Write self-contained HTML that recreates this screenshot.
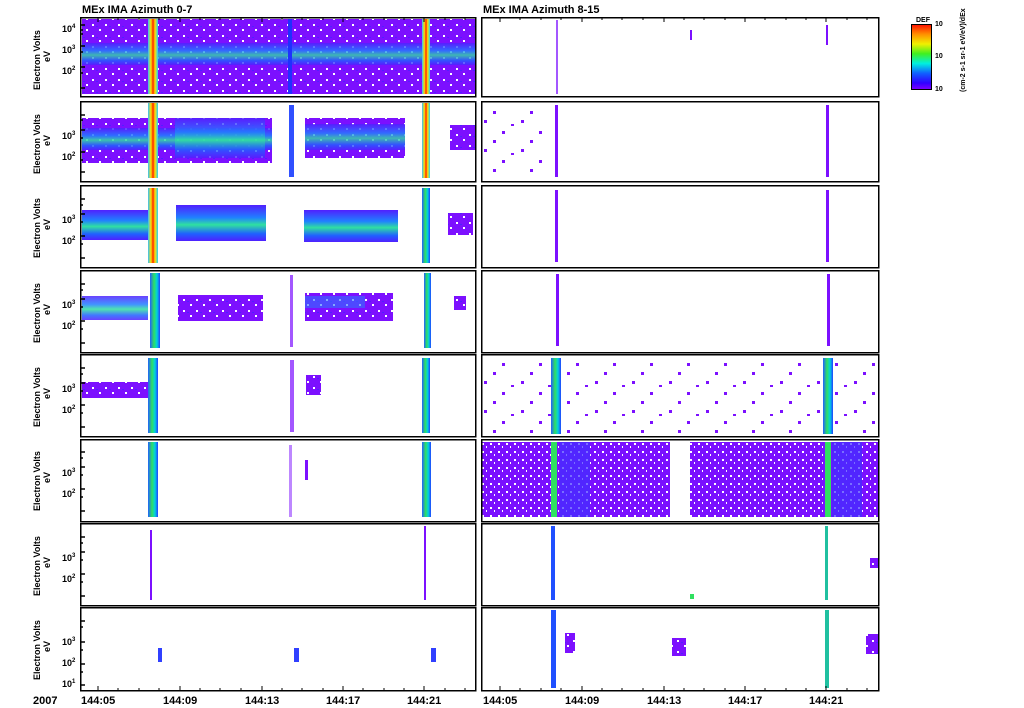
<!DOCTYPE html>
<html><head><meta charset="utf-8"><style>
html,body{margin:0;padding:0;background:#fff;width:1024px;height:708px;overflow:hidden}
svg{display:block;font-family:"Liberation Sans",sans-serif}
.lbl{font-size:11px;font-weight:bold;fill:#000}
.yl{font-size:9px;font-weight:bold;fill:#000}
</style></head><body>
<svg width="1024" height="708" viewBox="0 0 1024 708" xmlns="http://www.w3.org/2000/svg">
<defs>
<pattern id="dense" width="13" height="11" patternUnits="userSpaceOnUse">
<rect width="13" height="11" fill="#7c10ff"/><rect x="1" y="2" width="2" height="2" fill="#fff"/><rect x="8" y="7" width="2" height="2" fill="#fff"/><rect x="5" y="4" width="2" height="1" fill="#5020ff"/>
</pattern>
<pattern id="vdense" width="8" height="8" patternUnits="userSpaceOnUse">
<rect width="8" height="8" fill="#7a10ff"/><rect x="2" y="3" width="2" height="2" fill="#fff"/><rect x="6" y="6" width="1" height="2" fill="#fff"/>
</pattern>
<pattern id="sparse" width="37" height="29" patternUnits="userSpaceOnUse">
<rect x="3" y="4" width="3" height="3" fill="#7c10ff"/><rect x="21" y="15" width="3" height="3" fill="#7c10ff"/><rect x="12" y="24" width="3" height="3" fill="#7c10ff"/><rect x="30" y="8" width="3" height="2" fill="#7c10ff"/>
</pattern>
<linearGradient id="rain" x1="0" x2="1">
<stop offset="0" stop-color="#30c0ff"/><stop offset=".3" stop-color="#ffe000"/><stop offset=".5" stop-color="#ff2000"/><stop offset=".7" stop-color="#ffe000"/><stop offset="1" stop-color="#20d0ff"/>
</linearGradient>
<linearGradient id="gstripe" x1="0" x2="1">
<stop offset="0" stop-color="#2060ff"/><stop offset=".4" stop-color="#30e060"/><stop offset=".7" stop-color="#00d0e0"/><stop offset="1" stop-color="#2040ff"/>
</linearGradient>
<linearGradient id="cbar" x1="0" y1="0" x2="0" y2="1">
<stop offset="0" stop-color="#ff1000"/><stop offset=".15" stop-color="#ff9000"/><stop offset=".3" stop-color="#f0f000"/><stop offset=".45" stop-color="#40f020"/><stop offset=".6" stop-color="#00f0e0"/><stop offset=".75" stop-color="#1060ff"/><stop offset=".9" stop-color="#3000ff"/><stop offset="1" stop-color="#8000ff"/>
</linearGradient>
<linearGradient id="band" x1="0" y1="0" x2="0" y2="1">
<stop offset="0" stop-color="#5020ff"/><stop offset=".35" stop-color="#2080ff"/><stop offset=".55" stop-color="#30e0a0"/><stop offset=".8" stop-color="#2060ff"/><stop offset="1" stop-color="#5020ff"/>
</linearGradient>
</defs>

<text x="82" y="13" class="lbl">MEx IMA Azimuth 0-7</text>
<text x="483" y="13" class="lbl">MEx IMA Azimuth 8-15</text>

<!-- Row 1 -->
<g>
<rect x="82" y="19" width="393" height="75" fill="url(#dense)"/>
<rect x="82" y="43" width="393" height="22" fill="url(#band)" opacity=".8"/>
<rect x="148" y="19" width="10" height="75" fill="url(#rain)"/>
<rect x="422" y="19" width="8" height="75" fill="url(#rain)"/>
<rect x="288" y="19" width="4" height="75" fill="#2030ff"/>
<rect x="556" y="20" width="2" height="74" fill="#7c10ff" opacity=".7"/>
<rect x="690" y="30" width="2" height="10" fill="#7c10ff"/>
<rect x="826" y="25" width="2" height="20" fill="#7c10ff"/>
</g>
<!-- Row 2 -->
<g>
<rect x="82" y="118" width="190" height="45" fill="url(#dense)"/>
<rect x="82" y="128" width="190" height="22" fill="url(#band)" opacity=".85"/>
<rect x="175" y="118" width="90" height="40" fill="url(#band)" opacity=".8"/>
<rect x="305" y="118" width="100" height="40" fill="url(#dense)"/>
<rect x="305" y="124" width="100" height="26" fill="url(#band)" opacity=".8"/>
<rect x="148" y="103" width="10" height="75" fill="url(#rain)"/>
<rect x="422" y="103" width="8" height="75" fill="url(#rain)"/>
<rect x="289" y="105" width="5" height="72" fill="#3050ff"/>
<rect x="450" y="125" width="25" height="25" fill="url(#dense)"/>
<rect x="484" y="105" width="60" height="70" fill="url(#sparse)"/>
<rect x="555" y="105" width="3" height="72" fill="#7c10ff"/>
<rect x="826" y="105" width="3" height="72" fill="#7c10ff"/>
</g>
<!-- Row 3 -->
<g>
<rect x="82" y="210" width="66" height="30" fill="url(#band)"/>
<rect x="176" y="205" width="90" height="36" fill="url(#band)"/>
<rect x="304" y="210" width="94" height="32" fill="url(#band)"/>
<rect x="148" y="188" width="10" height="75" fill="url(#rain)"/>
<rect x="422" y="188" width="8" height="75" fill="url(#gstripe)"/>
<rect x="448" y="213" width="25" height="22" fill="url(#dense)"/>
<rect x="555" y="190" width="3" height="72" fill="#7c10ff"/>
<rect x="826" y="190" width="3" height="72" fill="#7c10ff"/>
</g>
<!-- Row 4 -->
<g>
<rect x="82" y="296" width="66" height="24" fill="url(#band)" opacity=".85"/>
<rect x="178" y="295" width="85" height="26" fill="url(#dense)"/>
<rect x="305" y="293" width="88" height="28" fill="url(#dense)"/>
<rect x="305" y="296" width="60" height="12" fill="#3070ff" opacity=".6"/>
<rect x="150" y="273" width="10" height="75" fill="url(#gstripe)"/>
<rect x="424" y="273" width="7" height="75" fill="url(#gstripe)"/>
<rect x="290" y="275" width="3" height="72" fill="#7c10ff" opacity=".7"/>
<rect x="454" y="296" width="12" height="14" fill="url(#dense)"/>
<rect x="556" y="274" width="3" height="72" fill="#7c10ff"/>
<rect x="827" y="274" width="3" height="72" fill="#7c10ff"/>
</g>
<!-- Row 5 -->
<g>
<rect x="82" y="382" width="66" height="16" fill="url(#dense)"/>
<rect x="148" y="358" width="10" height="75" fill="url(#gstripe)"/>
<rect x="422" y="358" width="8" height="75" fill="url(#gstripe)"/>
<rect x="290" y="360" width="4" height="72" fill="#7c10ff" opacity=".7"/>
<rect x="306" y="375" width="15" height="20" fill="url(#dense)"/>
<rect x="482" y="358" width="396" height="76" fill="url(#sparse)"/>
<rect x="551" y="358" width="10" height="76" fill="url(#gstripe)"/>
<rect x="823" y="358" width="10" height="76" fill="url(#gstripe)"/>
</g>
<!-- Row 6 -->
<g>
<rect x="148" y="442" width="10" height="75" fill="url(#gstripe)"/>
<rect x="422" y="442" width="9" height="75" fill="url(#gstripe)"/>
<rect x="305" y="460" width="3" height="20" fill="#7c10ff"/>
<rect x="289" y="445" width="3" height="72" fill="#7c10ff" opacity=".5"/>
<rect x="482" y="442" width="188" height="75" fill="url(#vdense)"/>
<rect x="690" y="442" width="188" height="75" fill="url(#vdense)"/>
<rect x="560" y="442" width="30" height="75" fill="#4030ff" opacity=".7"/>
<rect x="832" y="442" width="30" height="75" fill="#4030ff" opacity=".7"/>
<rect x="551" y="442" width="6" height="75" fill="#30e060"/>
<rect x="825" y="442" width="6" height="75" fill="#30e060"/>
</g>
<!-- Row 7 -->
<g>
<rect x="150" y="530" width="2" height="70" fill="#7c10ff"/>
<rect x="424" y="526" width="2" height="74" fill="#7c10ff"/>
<rect x="551" y="526" width="4" height="74" fill="#2050ff"/>
<rect x="825" y="526" width="3" height="74" fill="#20c0a0"/>
<rect x="870" y="558" width="9" height="10" fill="url(#dense)"/>
<rect x="690" y="594" width="4" height="5" fill="#30e060"/>
</g>
<!-- Row 8 -->
<g>
<rect x="158" y="648" width="4" height="14" fill="#3040ff"/>
<rect x="294" y="648" width="5" height="14" fill="#3040ff"/>
<rect x="431" y="648" width="5" height="14" fill="#3040ff"/>
<rect x="551" y="610" width="5" height="78" fill="#2050ff"/>
<rect x="825" y="610" width="4" height="78" fill="#20c0a0"/>
<rect x="565" y="633" width="10" height="20" fill="url(#dense)"/>
<rect x="672" y="638" width="14" height="18" fill="url(#dense)"/>
<rect x="866" y="634" width="13" height="20" fill="url(#dense)"/>
</g>

<!-- frames -->
<g fill="none" stroke="#000" stroke-width="1.5">
<rect x="80.75" y="17.75" width="395" height="79"/><rect x="481.75" y="17.75" width="397" height="79"/>
<rect x="80.75" y="101.75" width="395" height="80"/><rect x="481.75" y="101.75" width="397" height="80"/>
<rect x="80.75" y="185.75" width="395" height="82"/><rect x="481.75" y="185.75" width="397" height="82"/>
<rect x="80.75" y="270.75" width="395" height="82"/><rect x="481.75" y="270.75" width="397" height="82"/>
<rect x="80.75" y="354.75" width="395" height="82"/><rect x="481.75" y="354.75" width="397" height="82"/>
<rect x="80.75" y="439.75" width="395" height="82"/><rect x="481.75" y="439.75" width="397" height="82"/>
<rect x="80.75" y="523.75" width="395" height="82"/><rect x="481.75" y="523.75" width="397" height="82"/>
<rect x="80.75" y="607.75" width="395" height="83"/><rect x="481.75" y="607.75" width="397" height="83"/>
</g>
<!-- x ticks -->
<g stroke="#000" stroke-width="1">
<path d="M98 17v5M118 17v3M139 17v3M159 17v3M180 17v5M200 17v3M220 17v3M241 17v3M262 17v5M282 17v3M302 17v3M323 17v3M343 17v5M363 17v3M384 17v3M404 17v3M424 17v5M445 17v3M465 17v3"/>
<path d="M98 691v-5M118 691v-3M139 691v-3M159 691v-3M180 691v-5M200 691v-3M220 691v-3M241 691v-3M262 691v-5M282 691v-3M302 691v-3M323 691v-3M343 691v-5M363 691v-3M384 691v-3M404 691v-3M424 691v-5M445 691v-3M465 691v-3"/>
<path d="M500 17v5M520 17v3M541 17v3M561 17v3M582 17v5M602 17v3M622 17v3M643 17v3M664 17v5M684 17v3M704 17v3M725 17v3M745 17v5M765 17v3M786 17v3M806 17v3M826 17v5M847 17v3M867 17v3"/>
<path d="M500 691v-5M520 691v-3M541 691v-3M561 691v-3M582 691v-5M602 691v-3M622 691v-3M643 691v-3M664 691v-5M684 691v-3M704 691v-3M725 691v-3M745 691v-5M765 691v-3M786 691v-3M806 691v-3M826 691v-5M847 691v-3M867 691v-3"/>
</g>
<!-- y axis labels -->
<g class="yl">
<g transform="translate(0,0)"><text x="62" y="32">10</text><text x="72" y="28" font-size="6">4</text><text x="62" y="53">10</text><text x="72" y="49" font-size="6">3</text><text x="62" y="74">10</text><text x="72" y="70" font-size="6">2</text></g>
<g transform="translate(0,84)"><text x="62" y="55">10</text><text x="72" y="51" font-size="6">3</text><text x="62" y="76">10</text><text x="72" y="72" font-size="6">2</text></g>
<g transform="translate(0,168)"><text x="62" y="55">10</text><text x="72" y="51" font-size="6">3</text><text x="62" y="76">10</text><text x="72" y="72" font-size="6">2</text></g>
<g transform="translate(0,253)"><text x="62" y="55">10</text><text x="72" y="51" font-size="6">3</text><text x="62" y="76">10</text><text x="72" y="72" font-size="6">2</text></g>
<g transform="translate(0,337)"><text x="62" y="55">10</text><text x="72" y="51" font-size="6">3</text><text x="62" y="76">10</text><text x="72" y="72" font-size="6">2</text></g>
<g transform="translate(0,421)"><text x="62" y="55">10</text><text x="72" y="51" font-size="6">3</text><text x="62" y="76">10</text><text x="72" y="72" font-size="6">2</text></g>
<g transform="translate(0,506)"><text x="62" y="55">10</text><text x="72" y="51" font-size="6">3</text><text x="62" y="76">10</text><text x="72" y="72" font-size="6">2</text></g>
<g transform="translate(0,590)"><text x="62" y="55">10</text><text x="72" y="51" font-size="6">3</text><text x="62" y="76">10</text><text x="72" y="72" font-size="6">2</text><text x="62" y="97">10</text><text x="72" y="93" font-size="6">1</text></g>
</g>
<!-- y minor ticks -->
<g stroke="#000" stroke-width="1.5">
<path d="M80 25h5M80 30h3M80 34h3M80 46h5M80 52h3M80 67h5M80 73h3M80 88h5"/>
<path d="M80 115h5M80 120h3M80 130h5M80 138h3M80 152h5M80 160h3M80 172h5"/>
<path d="M80 199h5M80 205h3M80 214h5M80 222h3M80 236h5M80 244h3M80 258h5"/>
<path d="M80 284h5M80 290h3M80 299h5M80 307h3M80 321h5M80 329h3M80 343h5"/>
<path d="M80 368h5M80 374h3M80 383h5M80 391h3M80 405h5M80 413h3M80 427h5"/>
<path d="M80 452h5M80 458h3M80 467h5M80 475h3M80 489h5M80 497h3M80 511h5"/>
<path d="M80 537h5M80 543h3M80 552h5M80 560h3M80 574h5M80 582h3M80 596h5"/>
<path d="M80 621h5M80 627h3M80 642h5M80 650h3M80 664h5M80 672h3M80 685h5"/>
</g>
<!-- rotated labels -->
<g class="yl" font-size="10">
<text transform="translate(40,90) rotate(-90)">Electron Volts</text><text transform="translate(50,62) rotate(-90)">eV</text>
<text transform="translate(40,174) rotate(-90)">Electron Volts</text><text transform="translate(50,146) rotate(-90)">eV</text>
<text transform="translate(40,258) rotate(-90)">Electron Volts</text><text transform="translate(50,230) rotate(-90)">eV</text>
<text transform="translate(40,343) rotate(-90)">Electron Volts</text><text transform="translate(50,315) rotate(-90)">eV</text>
<text transform="translate(40,427) rotate(-90)">Electron Volts</text><text transform="translate(50,399) rotate(-90)">eV</text>
<text transform="translate(40,511) rotate(-90)">Electron Volts</text><text transform="translate(50,483) rotate(-90)">eV</text>
<text transform="translate(40,596) rotate(-90)">Electron Volts</text><text transform="translate(50,568) rotate(-90)">eV</text>
<text transform="translate(40,680) rotate(-90)">Electron Volts</text><text transform="translate(50,652) rotate(-90)">eV</text>
</g>
<!-- x labels -->
<g class="lbl">
<text x="33" y="704">2007</text>
<text x="81" y="704">144:05</text><text x="163" y="704">144:09</text><text x="245" y="704">144:13</text><text x="326" y="704">144:17</text><text x="407" y="704">144:21</text>
<text x="483" y="704">144:05</text><text x="565" y="704">144:09</text><text x="647" y="704">144:13</text><text x="728" y="704">144:17</text><text x="809" y="704">144:21</text>
</g>
<!-- colorbar -->
<rect x="911.5" y="24.5" width="20" height="65" fill="url(#cbar)" stroke="#000"/>
<text x="916" y="22" font-size="7" font-weight="bold">DEF</text>
<g font-size="7" font-weight="bold"><text x="935" y="26">10</text><text x="935" y="58">10</text><text x="935" y="91">10</text></g>
<text transform="translate(965,92) rotate(-90)" font-size="7" font-weight="bold">(cm-2 s-1 sr-1 eV/eV)/dEx</text>
</svg>
</body></html>
